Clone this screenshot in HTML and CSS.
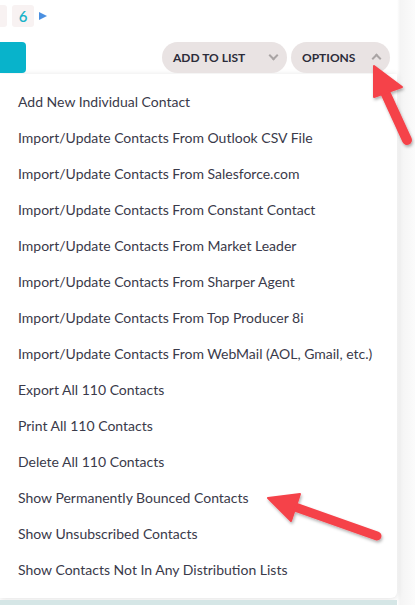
FILE: index.html
```html
<!DOCTYPE html>
<html lang="en">
<head>
  <meta charset="UTF-8" />
  <title>Contacts - Options</title>
  <link rel="stylesheet" href="styles.css">
</head>
<body>
  <div class="page">
    <div class="pager">
      <span class="page-box cut"></span>
      <span class="page-box">6</span>
      <span class="next"></span>
    </div>

    <div class="toolbar">
      <span class="teal-btn"></span>
      <div class="actions">
        <button class="pill">ADD TO LIST <span class="chev down"></span></button>
        <button class="pill">OPTIONS <span class="chev up"></span></button>
      </div>
    </div>

    <ul class="menu">
      <li>Add New Individual Contact</li>
      <li>Import/Update Contacts From Outlook CSV File</li>
      <li>Import/Update Contacts From Salesforce.com</li>
      <li>Import/Update Contacts From Constant Contact</li>
      <li>Import/Update Contacts From Market Leader</li>
      <li>Import/Update Contacts From Sharper Agent</li>
      <li>Import/Update Contacts From Top Producer 8i</li>
      <li>Import/Update Contacts From WebMail (AOL, Gmail, etc.)</li>
      <li>Export All 110 Contacts</li>
      <li>Print All 110 Contacts</li>
      <li>Delete All 110 Contacts</li>
      <li>Show Permanently Bounced Contacts</li>
      <li>Show Unsubscribed Contacts</li>
      <li>Show Contacts Not In Any Distribution Lists</li>
    </ul>
    <div class="strip"></div>

    <svg class="arrows" width="415" height="605" viewBox="0 0 415 605">
      <defs>
        <filter id="sh" x="-20%" y="-20%" width="140%" height="140%">
          <feDropShadow dx="1" dy="2" stdDeviation="1.5" flood-color="#000" flood-opacity="0.3"/>
        </filter>
      </defs>
      <g fill="#f5424a" stroke="#f5424a" filter="url(#sh)">
        <line x1="407" y1="140" x2="385" y2="92" stroke-width="10" stroke-linecap="round"/>
        <polygon points="374,66 402,87 374,97" stroke-width="2" stroke-linejoin="round"/>
        <line x1="377" y1="536" x2="295" y2="507" stroke-width="9" stroke-linecap="round"/>
        <polygon points="268,498 300,494 291,521" stroke-width="2" stroke-linejoin="round"/>
      </g>
    </svg>
  </div>
</body>
</html>
```

FILE: styles.css
```css
body { margin: 0; background: #fff; font-family: "Lato", "Open Sans", sans-serif; color: #333; }
.page { position: relative; width: 415px; height: 605px; overflow: hidden; background: linear-gradient(to right, #fff 397px, #f4f4f4 400px, #fbfbfb 415px); }

.pager { display: flex; align-items: center; gap: 5px; height: 22px; padding-top: 5px; margin-left: -15px; }
.page-box { width: 22px; height: 22px; border-radius: 3px; background: #f8f2f2; color: #19b3c9; font-size: 15px; font-weight: 600; display: flex; align-items: center; justify-content: center; }
.next { width: 0; height: 0; border-left: 8px solid #4a8fe0; border-top: 4px solid transparent; border-bottom: 4px solid transparent; }

.toolbar { display: flex; justify-content: space-between; align-items: flex-start; margin-top: 15px; height: 32px; }
.teal-btn { width: 26px; height: 31px; background: #08b3cb; border-radius: 0 4px 4px 0; }
.actions { display: flex; gap: 4px; margin-right: 25px; }
.pill { display: flex; align-items: center; justify-content: space-between; height: 31px; border: none; border-radius: 16px; background: #e9e3e3; color: #2c2c3a; font-family: "Lato", sans-serif; font-weight: bold; font-size: 12px; padding: 0 10px 1px 11px; }
.pill:first-child { width: 125px; }
.pill:last-child { width: 99px; }
.chev { width: 5px; height: 5px; border-right: 2px solid #a9a4a4; border-bottom: 2px solid #a9a4a4; }
.chev.down { transform: rotate(45deg); margin-top: -3px; }
.chev.up { transform: rotate(-135deg); margin-top: 3px; }

.menu { list-style: none; margin: 0; padding: 10px 0 10px; width: 397px; background: #fff; border-radius: 0 0 6px 0; box-shadow: 0 1px 6px rgba(0,0,0,0.12); }
.menu li { height: 36px; line-height: 36px; padding-left: 18px; font-size: 14px; color: #3a3a4a; }
.strip { width: 397px; height: 10px; margin-top: 2px; background: #d5e6e6; }

.arrows { position: absolute; left: 0; top: 0; pointer-events: none; }
```
